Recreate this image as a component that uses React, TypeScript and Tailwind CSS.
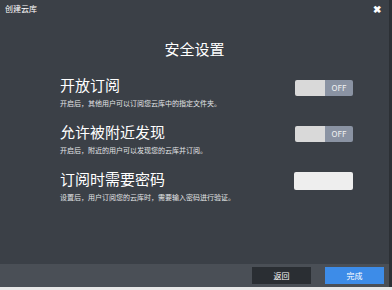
const font = { fontFamily: '"Noto Sans CJK SC", "Noto Sans", sans-serif' };

function Toggle() {
  return (
    <div className="flex h-[16px] w-[58px] overflow-hidden rounded-[2px]">
      <div className="w-[30px] bg-[#d9d9d9]" />
      <div className="flex flex-1 items-center justify-center bg-[#8a93a3] text-[8px] leading-none text-[#f2f2f2]">
        OFF
      </div>
    </div>
  );
}

const rows = [
  { title: "开放订阅", desc: "开启后，其他用户可以订阅您云库中的指定文件夹。", kind: "toggle", offset: "mt-[3px]" },
  { title: "允许被附近发现", desc: "开启后，附近的用户可以发现您的云库并订阅。", kind: "toggle", offset: "mt-[2px]" },
  { title: "订阅时需要密码", desc: "设置后，用户订阅您的云库时，需要输入密码进行验证。", kind: "input", offset: "mt-[1px]" },
];

export default function App() {
  return (
    <div className="flex h-[290px] w-[392px] flex-col bg-[#e8e8e8]" style={font}>
      <div className="flex h-[287px] w-[392px]">
        <div className="flex h-full w-[389px] flex-col bg-[#3b4047]">
          <div className="flex h-[28px] items-start justify-between pl-[5px] pr-[8px] pt-[3px]">
            <span className="text-[8px] leading-[12px] text-white">创建云库</span>
            <span className="text-[10px] font-bold leading-[12px] text-white">✖</span>
          </div>

          <div className="flex flex-1 flex-col">
            <h1 className="mt-[12px] text-center text-[15px] leading-[18px] text-white">安全设置</h1>

            <div className="mt-[19px] flex flex-col gap-[16px] pl-[60px] pr-[36px]">
              {rows.map((r) => (
                <div key={r.title} className="flex items-start justify-between">
                  <div className="flex flex-col">
                    <div className="text-[15px] leading-[16px] text-white">{r.title}</div>
                    <div className="mt-[5px] text-[7px] leading-[10px] text-[#e2e4e6]">{r.desc}</div>
                  </div>
                  <div className={r.offset}>
                    {r.kind === "toggle" ? (
                      <Toggle />
                    ) : (
                      <div className="h-[18px] w-[59px] rounded-[2px] bg-[#eeeeee]" />
                    )}
                  </div>
                </div>
              ))}
            </div>
          </div>

          <div className="flex h-[23px] items-center justify-end gap-[14px] bg-[#4a4f56] pr-[5px]">
            <button className="flex h-[17px] w-[59px] items-center justify-center bg-[#2a2e33] text-[8px] text-white">
              返回
            </button>
            <button className="flex h-[17px] w-[59px] items-center justify-center bg-[#3d8ce8] text-[8px] text-white">
              完成
            </button>
          </div>
        </div>
        <div className="h-full w-[3px] bg-[#2c3035]" />
      </div>
    </div>
  );
}
